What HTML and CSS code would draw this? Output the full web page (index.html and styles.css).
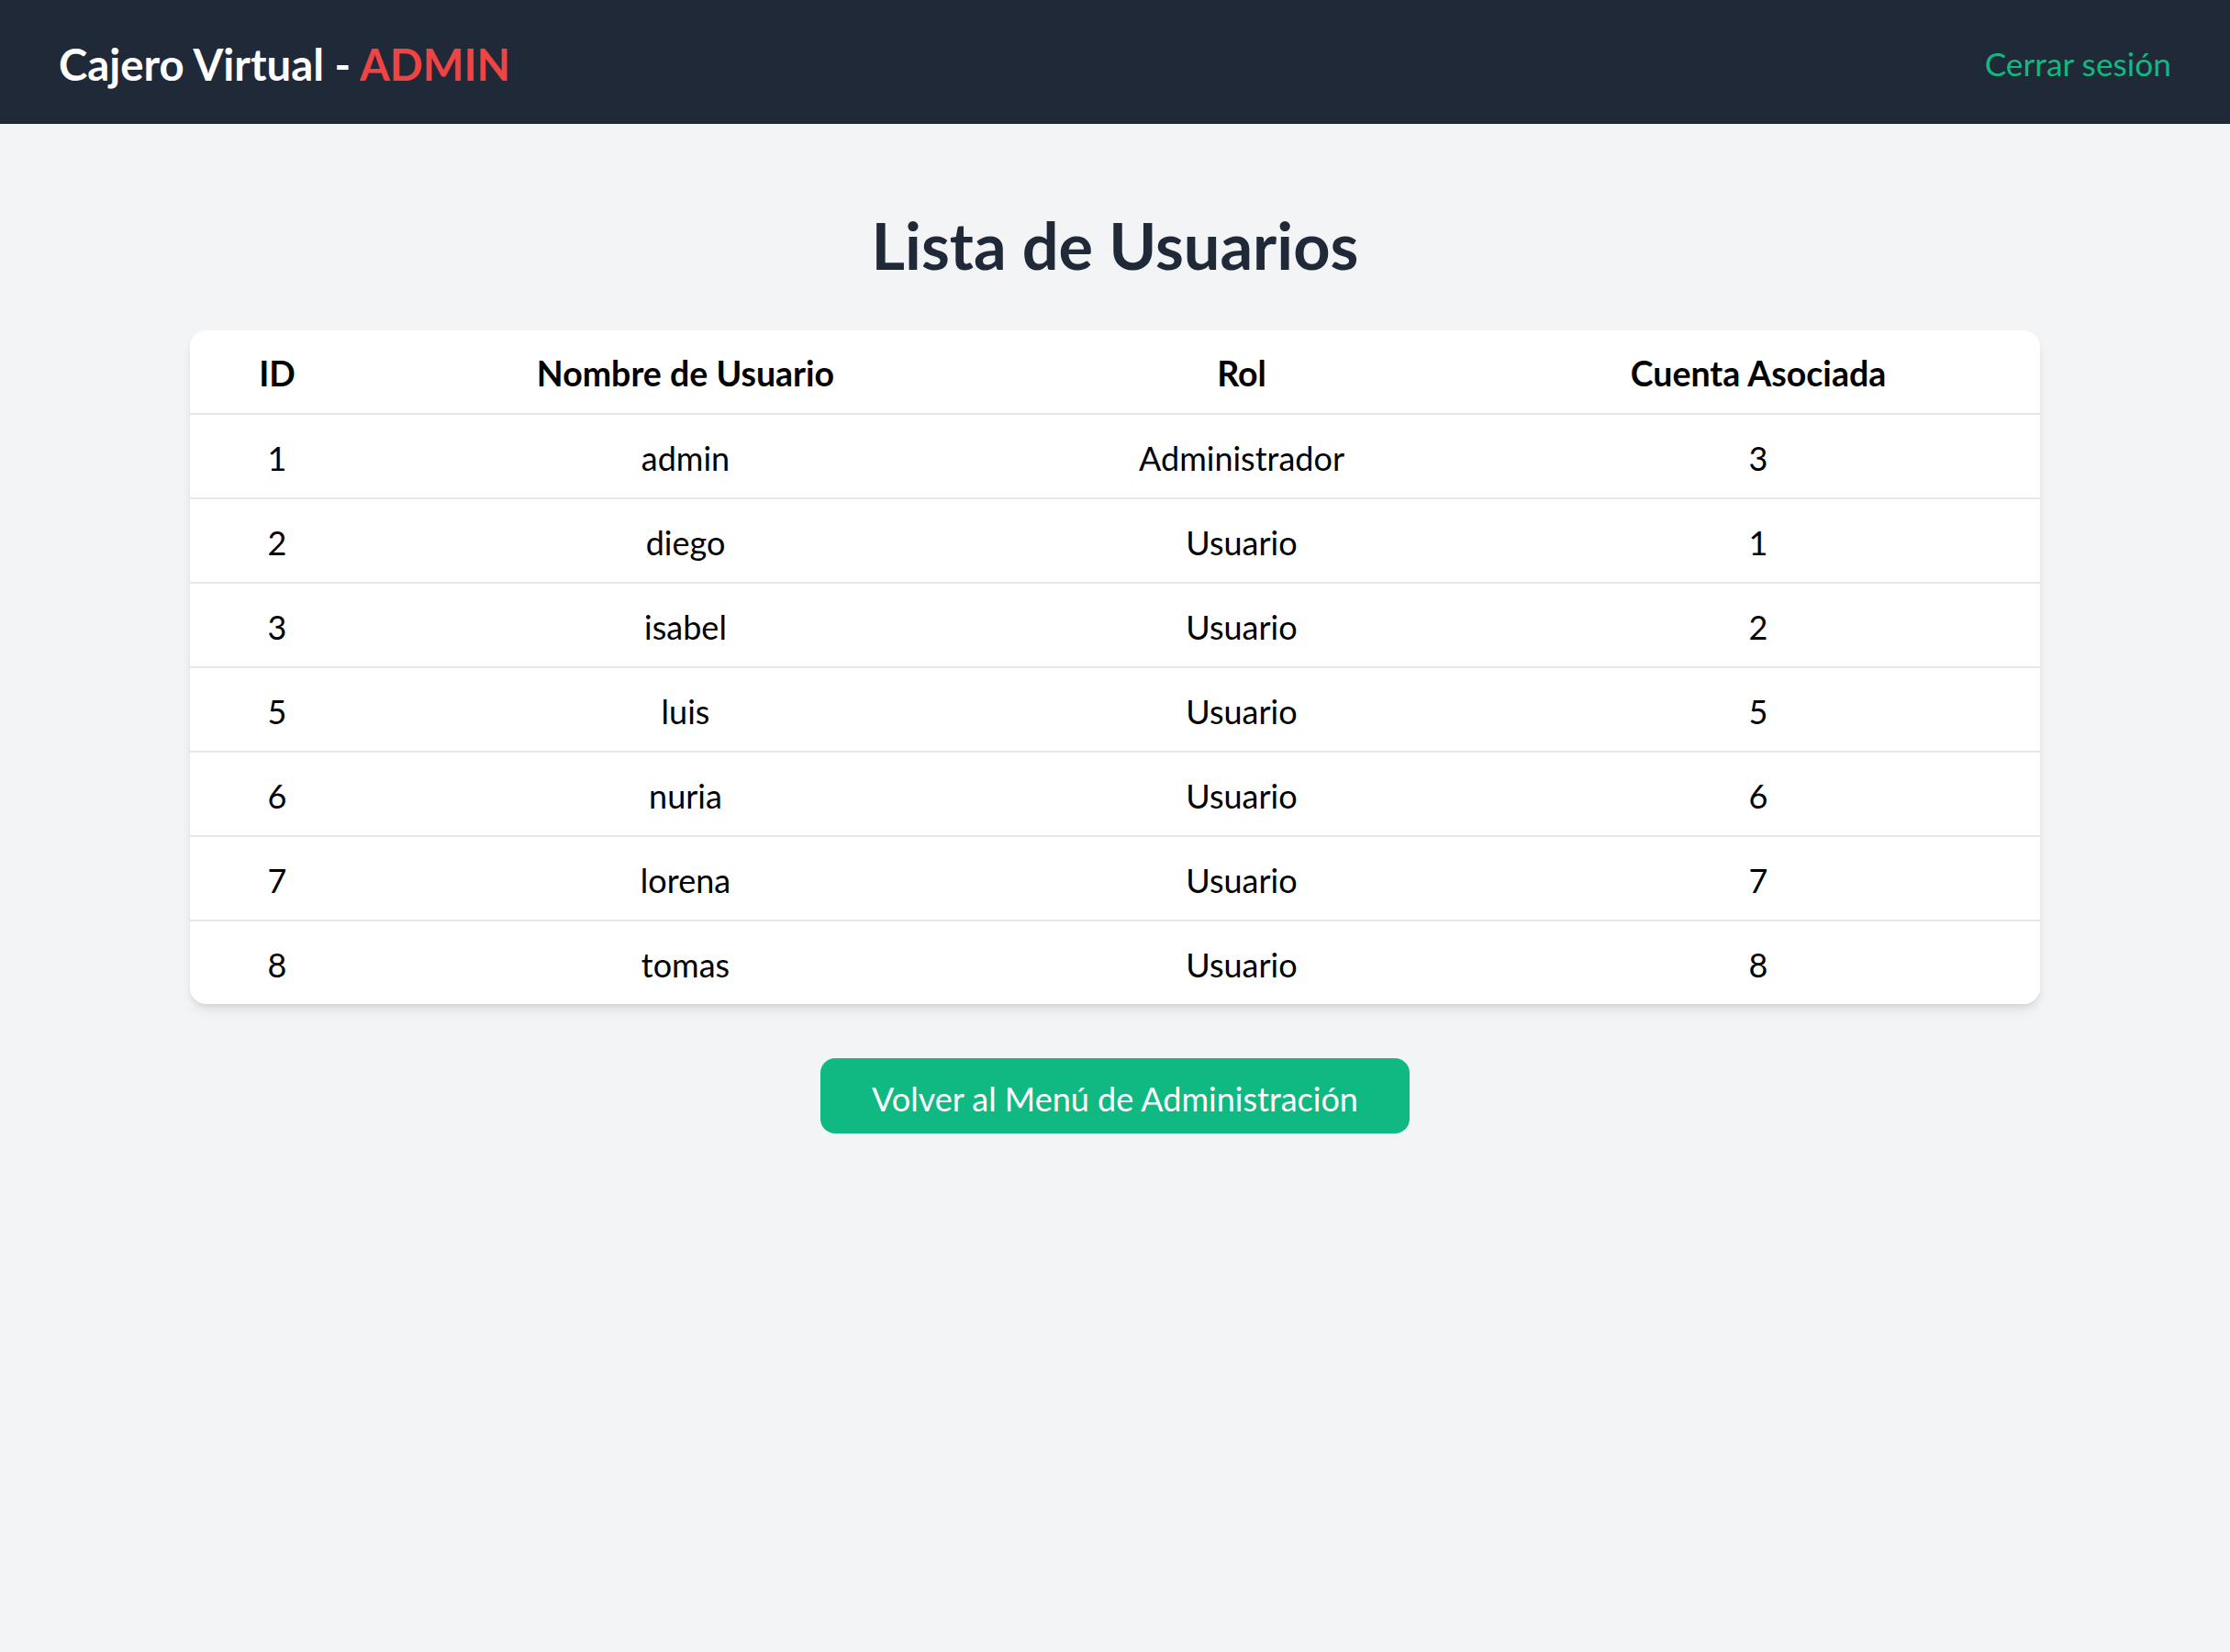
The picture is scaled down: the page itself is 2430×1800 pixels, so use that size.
FILE: index.html
```html
<!DOCTYPE html>
<html lang="es">
<head>
<meta charset="utf-8">
<title>Lista de Usuarios</title>
<link rel="stylesheet" href="styles.css">
</head>
<body>
<header class="topbar">
  <div class="brand">Cajero Virtual - <span class="brand-admin">ADMIN</span></div>
  <a class="logout" href="#">Cerrar sesión</a>
</header>
<main class="main">
  <h1 class="page-title">Lista de Usuarios</h1>
  <div class="card">
    <table class="users">
      <colgroup>
        <col class="c-id"><col class="c-name"><col class="c-rol"><col class="c-cuenta">
      </colgroup>
      <thead>
        <tr><th>ID</th><th>Nombre de Usuario</th><th>Rol</th><th>Cuenta Asociada</th></tr>
      </thead>
      <tbody>
        <tr><td>1</td><td>admin</td><td>Administrador</td><td>3</td></tr>
        <tr><td>2</td><td>diego</td><td>Usuario</td><td>1</td></tr>
        <tr><td>3</td><td>isabel</td><td>Usuario</td><td>2</td></tr>
        <tr><td>5</td><td>luis</td><td>Usuario</td><td>5</td></tr>
        <tr><td>6</td><td>nuria</td><td>Usuario</td><td>6</td></tr>
        <tr><td>7</td><td>lorena</td><td>Usuario</td><td>7</td></tr>
        <tr><td>8</td><td>tomas</td><td>Usuario</td><td>8</td></tr>
      </tbody>
    </table>
  </div>
  <div class="actions">
    <a class="btn" href="#">Volver al Menú de Administración</a>
  </div>
</main>
</body>
</html>
```
FILE: styles.css
```css
* { box-sizing: border-box; }
html, body { margin: 0; padding: 0; }
body {
  background: #f3f4f6;
  font-family: "Lato", "Open Sans", sans-serif;
  color: #000;
  min-height: 1800px;
}
.topbar {
  background: #1f2937;
  height: 135px;
  padding: 0 64px 0 64px;
  display: flex;
  align-items: center;
  justify-content: space-between;
}
.brand {
  color: #ffffff;
  font-weight: 700;
  font-size: 47.3px;
  line-height: 71px;
  padding-top: 3px;
}
.brand-admin { color: #ef4444; }
.logout {
  color: #10b981;
  text-decoration: none;
  font-size: 35.3px;
  line-height: 56px;
  padding-top: 4px;
}
.main {
  padding: 92px 207px 0;
}
.page-title {
  margin: 0 0 53px;
  text-align: center;
  color: #1f2937;
  font-weight: 700;
  font-size: 70.3px;
  line-height: 80px;
}
.card {
  background: #ffffff;
  border-radius: 18px;
  overflow: hidden;
  box-shadow: 0 8px 14px -3px rgba(0,0,0,0.10), 0 4px 8px -4px rgba(0,0,0,0.10);
}
.users {
  width: 100%;
  border-collapse: collapse;
  table-layout: fixed;
}
.c-id { width: 190px; }
.c-name { width: 700px; }
.c-rol { width: 512px; }
.c-cuenta { width: 614px; }
.users th, .users td {
  text-align: center;
  padding: 19px 0 15px;
  line-height: 56px;
}
.users th {
  font-weight: 700;
  font-size: 37.5px;
  border-bottom: 2px solid #e5e7eb;
}
.users td {
  font-size: 36px;
  font-weight: 400;
}
.users tbody tr + tr td { border-top: 2px solid #e5e7eb; }
.actions {
  display: flex;
  justify-content: center;
  margin-top: 59px;
}
.btn {
  display: inline-block;
  background: #10b981;
  color: #ffffff;
  text-decoration: none;
  font-size: 36px;
  line-height: 54px;
  padding: 17px 56px 11px;
  border-radius: 16px;
}
```
